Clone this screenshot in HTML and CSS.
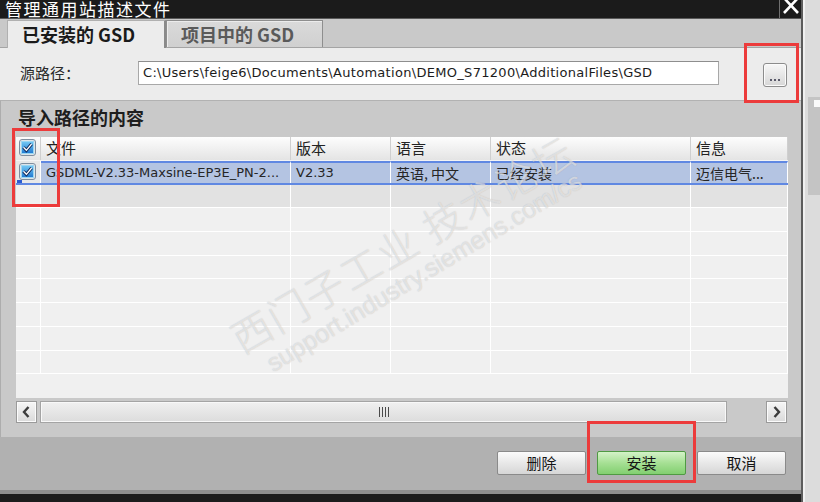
FILE: index.html
```html
<!DOCTYPE html>
<html lang="zh-CN">
<head>
<meta charset="utf-8">
<title>管理通用站描述文件</title>
<link rel="stylesheet" href="styles.css">
</head>
<body>
<div class="screen">
  <div class="dialog">
    <div class="titlebar">
      <span class="title">管理通用站描述文件</span>
      <div class="close">
        <svg width="18" height="15" viewBox="0 0 18 15"><path d="M2 -2 L16 13 M16 -2 L2 13" stroke="#fff" stroke-width="2.6" fill="none"/></svg>
      </div>
    </div>
    <div class="tabbar">
      <div class="tab active">已安装的 GSD</div>
      <div class="tab">项目中的 GSD</div>
    </div>
    <div class="source">
      <span class="src-label">源路径：</span>
      <div class="path-input">C:\Users\feige6\Documents\Automation\DEMO_S71200\AdditionalFiles\GSD</div>
      <div class="browse"><span class="dots"><i></i><i></i><i></i></span></div>
    </div>
    <div class="section">
      <div class="section-title">导入路径的内容</div>
      <div class="table">
        <div class="row head">
          <div class="cell cb"><svg class="check" width="17" height="17" viewBox="0 0 17 17"><defs><linearGradient id="g1" x1="0" y1="0" x2="0" y2="1"><stop offset="0" stop-color="#74c8f4"/><stop offset="1" stop-color="#1f78d0"/></linearGradient></defs><rect x="0.5" y="0.5" width="16" height="16" rx="2.5" fill="#dde4ea" stroke="#7e8e9e"/><rect x="2.5" y="2.5" width="12" height="12" fill="url(#g1)" stroke="#9ad6f2"/><path d="M4.5 8.3 L7.4 11.3 L12.6 5" fill="none" stroke="#10295a" stroke-width="3.2"/><path d="M4.5 8.3 L7.4 11.3 L12.6 5" fill="none" stroke="#fff" stroke-width="1.3"/></svg></div>
          <div class="cell">文件</div>
          <div class="cell">版本</div>
          <div class="cell">语言</div>
          <div class="cell">状态</div>
          <div class="cell">信息</div>
        </div>
        <div class="row sel">
          <div class="cell cb"><svg class="check" width="17" height="17" viewBox="0 0 17 17"><defs><linearGradient id="g2" x1="0" y1="0" x2="0" y2="1"><stop offset="0" stop-color="#74c8f4"/><stop offset="1" stop-color="#1f78d0"/></linearGradient></defs><rect x="0.5" y="0.5" width="16" height="16" rx="2.5" fill="#dde4ea" stroke="#7e8e9e"/><rect x="2.5" y="2.5" width="12" height="12" fill="url(#g2)" stroke="#9ad6f2"/><path d="M4.5 8.3 L7.4 11.3 L12.6 5" fill="none" stroke="#10295a" stroke-width="3.2"/><path d="M4.5 8.3 L7.4 11.3 L12.6 5" fill="none" stroke="#fff" stroke-width="1.3"/></svg><span class="focus"></span></div>
          <div class="cell lat">GSDML-V2.33-Maxsine-EP3E_PN-2...</div>
          <div class="cell lat">V2.33</div>
          <div class="cell">英语, 中文</div>
          <div class="cell">已经安装</div>
          <div class="cell">迈信电气...</div>
        </div>
        <div class="row dim"><div class="cell cb"></div><div class="cell"></div><div class="cell"></div><div class="cell"></div><div class="cell"></div><div class="cell"></div></div>
        <div class="row"><div class="cell cb"></div><div class="cell"></div><div class="cell"></div><div class="cell"></div><div class="cell"></div><div class="cell"></div></div>
        <div class="row"><div class="cell cb"></div><div class="cell"></div><div class="cell"></div><div class="cell"></div><div class="cell"></div><div class="cell"></div></div>
        <div class="row"><div class="cell cb"></div><div class="cell"></div><div class="cell"></div><div class="cell"></div><div class="cell"></div><div class="cell"></div></div>
        <div class="row"><div class="cell cb"></div><div class="cell"></div><div class="cell"></div><div class="cell"></div><div class="cell"></div><div class="cell"></div></div>
        <div class="row"><div class="cell cb"></div><div class="cell"></div><div class="cell"></div><div class="cell"></div><div class="cell"></div><div class="cell"></div></div>
        <div class="row"><div class="cell cb"></div><div class="cell"></div><div class="cell"></div><div class="cell"></div><div class="cell"></div><div class="cell"></div></div>
        <div class="row"><div class="cell cb"></div><div class="cell"></div><div class="cell"></div><div class="cell"></div><div class="cell"></div><div class="cell"></div></div>
      </div>
      <div class="hscroll">
        <div class="sbtn"><svg width="19" height="20" viewBox="0 0 19 20"><path d="M11.5 5 L7 10 L11.5 15" fill="none" stroke="#3c3c3c" stroke-width="2.4"/></svg></div>
        <div class="thumb"><span class="grip"><i></i><i></i><i></i><i></i></span></div>
        <div class="track"></div>
        <div class="sbtn"><svg width="19" height="20" viewBox="0 0 19 20"><path d="M7.5 5 L12 10 L7.5 15" fill="none" stroke="#3c3c3c" stroke-width="2.4"/></svg></div>
      </div>
    </div>
    <div class="footer">
      <button class="btn">删除</button>
      <button class="btn primary">安装</button>
      <button class="btn">取消</button>
    </div>
    <div class="bottombar"></div>
  </div>
  <div class="side"><div class="side-block"><span class="side-sq"></span></div></div>

  <div class="mark mark-a">西门子工业 技术论坛</div>
  <div class="mark mark-b">support.industry.siemens.com/cs</div>

  <div class="redbox rb-browse"></div>
  <div class="redbox rb-check"></div>
  <div class="redbox rb-install"></div>
</div>
</body>
</html>
```

FILE: styles.css
```css
* { box-sizing: border-box; margin: 0; padding: 0; }
html, body { width: 820px; height: 502px; overflow: hidden; }
body {
  font-family: "DejaVu Sans", "Noto Sans CJK SC", sans-serif;
  background: #dadada;
  color: #1e1e1e;
}
.screen { position: relative; display: flex; width: 820px; height: 502px; }

.dialog {
  width: 803px;
  height: 502px;
  display: flex;
  flex-direction: column;
  border-right: 2px solid #5c5c5c;
  background: #ececec;
}

/* title */
.titlebar {
  height: 19px;
  background: #1b1b1b;
  border-bottom: 1px solid #5a5a5a;
  display: flex;
  justify-content: space-between;
}
.title {
  display: block;
  font-family: "Noto Sans CJK SC", sans-serif;
  font-size: 17px;
  line-height: 18px;
  padding-left: 5px;
  color: #fff;
  letter-spacing: 1.5px;
}
.close {
  width: 22px;
  height: 18px;
  overflow: hidden;
  border-left: 1px solid #707070;
  display: flex;
  justify-content: center;
}

/* tabs */
.tabbar {
  height: 29px;
  background: #c9c9c9;
  border-bottom: 1px solid #a4a4a4;
  display: flex;
  align-items: flex-end;
  padding-left: 7px;
}
.tab {
  font-family: "Noto Sans CJK SC", sans-serif;
  font-weight: 700;
  font-size: 18px;
  line-height: 26px;
  height: 27px;
  width: 157px;
  padding-left: 14px;
  color: #5a5a5a;
  background: linear-gradient(#dadada, #d0d0d0);
  border: 1px solid #8e8e8e;
  border-bottom: none;
  box-shadow: inset 1px 1px 0 #ececec;
}
.tab.active {
  width: 159px;
  height: 28px;
  margin-bottom: -1px;
  background: #ececec;
  color: #1a1a1a;
  border-color: #b0b0b0 #8a8a8a #b0b0b0 #b0b0b0;
  border-right-width: 2px;
  box-shadow: none;
}

/* source path */
.source {
  height: 52px;
  display: flex;
  align-items: flex-start;
  padding: 13px 0 0 20px;
}
.src-label {
  width: 118px;
  font-family: "Noto Sans CJK SC", sans-serif;
  font-size: 15px;
  line-height: 24px;
  color: #2a2a2a;
}
.path-input {
  width: 581px;
  height: 24px;
  background: #fff;
  border: 1px solid #a8a8a8;
  border-top-color: #8e8e8e;
  font-family: "DejaVu Sans", sans-serif;
  font-size: 13px;
  letter-spacing: 0.3px;
  line-height: 22px;
  padding-left: 4px;
  color: #1c1c1c;
  white-space: nowrap;
  overflow: hidden;
}
.browse {
  width: 24px;
  height: 24px;
  margin: 2px 0 0 44px;
  border: 1px solid #8c8c8c;
  border-radius: 3px;
  background: linear-gradient(#f7f7f7, #d6d6d6);
  box-shadow: inset 0 0 0 1px #fbfbfb;
  display: flex;
  align-items: flex-end;
  justify-content: center;
  padding-bottom: 5px;
}
.dots { display: flex; gap: 2px; }
.dots i { display: block; width: 2px; height: 2px; background: #5a5a6a; }

/* section */
.section {
  height: 337px;
  background: #c9c9c9;
  border-top: 1px solid #b2b2b2;
  border-left: 1px solid #adadad;
  padding-left: 15px;
}
.section-title {
  height: 36px;
  margin-left: 2px;
  font-family: "Noto Sans CJK SC", sans-serif;
  font-weight: 700;
  font-size: 18px;
  line-height: 32px;
  color: #1e1e1e;
}

.table {
  width: 772px;
  height: 261px;
  background: #f0f0f0;
  overflow: hidden;
}
.row {
  display: grid;
  grid-template-columns: 25px 250px 100px 100px 200px 97px;
  height: 23.7px;
  border-bottom: 1px solid #fff;
}
.cell {
  border-right: 1px solid #fff;
  padding-left: 5px;
  white-space: nowrap;
  overflow: hidden;
  font-family: "Noto Sans CJK SC", sans-serif;
  font-size: 14px;
  color: #262626;
}
.cell.lat { font-family: "DejaVu Sans", "Noto Sans CJK SC", sans-serif; font-size: 13px; }
.cell.cb { padding-left: 3px; position: relative; }
.check { display: block; }

.row.head {
  height: 24px;
  background: linear-gradient(#fdfdfd, #e4e4e4);
  border-bottom: 1px solid #f4f4f4;
}
.row.head .cell {
  border-right: 1px solid #cfcfcf;
  font-size: 15px;
  line-height: 22px;
  color: #222;
}
.row.head .cell.cb { padding-top: 2px; }

.row.sel { border-bottom: 2px solid #6088e2; }
.row.sel .cell {
  background: #b4c4e2;
  border-top: 2px solid #6088e2;
  line-height: 20px;
}
.row.sel .cell.cb {
  background: #e8e8e8;
  border-top: none;
  padding-top: 2px;
}
.focus {
  position: absolute;
  left: 1px;
  bottom: -2px;
  width: 5px;
  height: 5px;
  background: #2c5bd0;
}
.row.dim .cell { background: #e2e2e2; }
.row.dim .cell.cb { background: #efefef; }

/* horizontal scrollbar */
.hscroll {
  margin-top: 3px;
  height: 22px;
  width: 771px;
  display: flex;
}
.sbtn {
  width: 21px;
  height: 22px;
  border: 1px solid #9a9a9a;
  background: linear-gradient(#f6f6f6, #dadada);
  box-shadow: inset 0 0 0 1px #fbfbfb;
}
.thumb {
  width: 687px;
  margin-left: 3px;
  border: 1px solid #a4a4a4;
  background: linear-gradient(#f0f0f0, #dcdcdc);
  box-shadow: inset 0 0 0 1px #f8f8f8;
  display: flex;
  align-items: center;
  justify-content: center;
}
.grip { display: flex; gap: 2px; }
.grip i { display: block; width: 1px; height: 10px; background: #4a4a4a; }
.track { width: 39px; }

/* footer */
.footer {
  height: 53px;
  background: #b1b1b1;
  display: flex;
  justify-content: flex-end;
  align-items: flex-start;
  gap: 11px;
  padding: 14px 15px 0 0;
}
.btn {
  width: 89px;
  height: 24px;
  border: 1px solid #8a8a8a;
  border-radius: 2px;
  background: linear-gradient(#fbfbfb, #e8e8e8 50%, #d6d6d6);
  font-family: "Noto Sans CJK SC", sans-serif;
  font-size: 15px;
  line-height: 20px;
  color: #151515;
}
.btn.primary {
  border-color: #4f9a43;
  background: linear-gradient(#d4f2c8, #a6e094 50%, #82cf70);
}
.bottombar {
  height: 12px;
  border-top: 4px solid #8e8e8e;
  background: #1c1c1c;
}

/* right strip */
.side {
  width: 17px;
  background: #dcdcdc;
  border-left: 2px solid #f0f0f0;
}
.side-block {
  margin: 97px 0 0 3px;
  height: 98px;
  background: #c4c4c4;
  position: relative;
}
.side-sq {
  position: absolute;
  right: 0;
  top: 3px;
  width: 6px;
  height: 7px;
  background: #fafafa;
}

/* watermark */
.mark {
  position: absolute;
  white-space: nowrap;
  color: rgba(255, 255, 255, 0.55);
  text-shadow: 0 0 1px rgba(110, 110, 110, 0.4);
  transform: translate(-50%, -50%) rotate(-30deg);
  pointer-events: none;
}
.mark-a {
  left: 402px;
  top: 243px;
  font-family: "Noto Sans CJK SC", sans-serif;
  font-weight: 300;
  font-size: 40px;
  letter-spacing: 2px;
}
.mark-b {
  left: 424px;
  top: 272px;
  font-family: "Liberation Sans", sans-serif;
  font-size: 25px;
  transform: translate(-50%, -50%) rotate(-31deg);
}

/* red annotation boxes */
.redbox {
  position: absolute;
  border: 3px solid #ec3b3b;
}
.rb-browse { left: 744px; top: 43px; width: 55px; height: 60px; }
.rb-check { left: 12px; top: 128px; width: 48px; height: 79px; }
.rb-install { left: 587px; top: 421px; width: 109px; height: 62px; }
```
